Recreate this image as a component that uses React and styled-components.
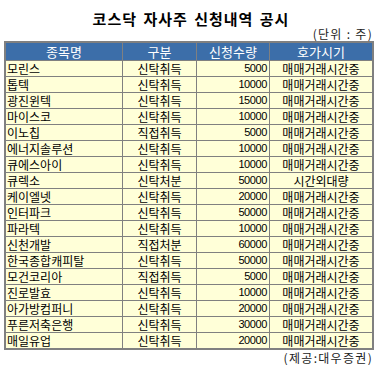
import React from 'react';
import styled, { createGlobalStyle } from 'styled-components';

const rows = [
  ['모린스', '신탁취득', '5000', '매매거래시간중'],
  ['톱텍', '신탁취득', '10000', '매매거래시간중'],
  ['광진윈텍', '신탁취득', '15000', '매매거래시간중'],
  ['마이스코', '신탁취득', '10000', '매매거래시간중'],
  ['이노칩', '직접취득', '5000', '매매거래시간중'],
  ['에너지솔루션', '신탁취득', '10000', '매매거래시간중'],
  ['큐에스아이', '신탁취득', '10000', '매매거래시간중'],
  ['큐렉소', '신탁처분', '50000', '시간외대량'],
  ['케이엘넷', '신탁취득', '20000', '매매거래시간중'],
  ['인터파크', '신탁취득', '50000', '매매거래시간중'],
  ['파라텍', '신탁취득', '10000', '매매거래시간중'],
  ['신천개발', '직접처분', '60000', '매매거래시간중'],
  ['한국종합캐피탈', '신탁취득', '50000', '매매거래시간중'],
  ['모건코리아', '직접취득', '5000', '매매거래시간중'],
  ['진로발효', '신탁취득', '10000', '매매거래시간중'],
  ['아가방컴퍼니', '신탁취득', '20000', '매매거래시간중'],
  ['푸른저축은행', '신탁취득', '30000', '매매거래시간중'],
  ['매일유업', '신탁취득', '20000', '매매거래시간중'],
];

const korean = '"Noto Sans CJK KR", sans-serif';
const latin = '"Liberation Sans", "Noto Sans CJK KR", sans-serif';

const GlobalStyle = createGlobalStyle`
  body {
    margin: 0;
    background: #ffffff;
    font-family: ${korean};
    color: #000000;
  }
`;

const Page = styled.div`
  width: 382px;
  height: 365px;
  overflow: hidden;
`;

const Title = styled.h1`
  margin: 10px 0 0;
  font-family: ${korean};
  font-size: 15px;
  line-height: 17px;
  font-weight: bold;
  text-align: center;
  letter-spacing: 1px;
  word-spacing: 2px;
`;

const Note = styled.div`
  margin-top: ${(p) => p.$top}px;
  padding-right: 9px;
  font-size: 12px;
  line-height: 14px;
  letter-spacing: 1.3px;
  text-align: right;
  color: #222;
`;

const Grid = styled.div`
  margin-left: 4px;
  width: 370px;
  box-sizing: border-box;
  display: grid;
  grid-template-columns: 116px 73px 72px 1fr;
  grid-auto-rows: 15px;
  grid-template-rows: 17px;
  gap: 1px;
  border: 2px solid #808080;
  background: #808080;
`;

const Row = styled.div`
  display: contents;
`;

const HeadCell = styled.div`
  background: #3c6ea9;
  color: #ffffff;
  font-size: 13px;
  line-height: 17px;
  text-align: center;
`;

const Cell = styled.div`
  padding: 0 ${(p) => (p.$align === 'right' ? 2 : 1)}px;
  font-family: ${(p) => (p.$num ? latin : korean)};
  font-size: ${(p) => (p.$num ? 11 : 12)}px;
  letter-spacing: ${(p) => (p.$num ? '-0.4px' : '0')};
  line-height: 15px;
  text-align: ${(p) => p.$align || 'left'};
  white-space: nowrap;
  overflow: hidden;
  background: #ffffd8;
`;

export default function App() {
  return (
    <Page>
      <GlobalStyle />
      <Title>코스닥 자사주 신청내역 공시</Title>
      <Note $top={0}>(단위 : 주)</Note>
      <Grid>
        <Row>
          <HeadCell>종목명</HeadCell>
          <HeadCell>구분</HeadCell>
          <HeadCell>신청수량</HeadCell>
          <HeadCell>호가시기</HeadCell>
        </Row>
        {rows.map(([name, kind, qty, time]) => (
          <Row key={name}>
            <Cell>{name}</Cell>
            <Cell $align="center">{kind}</Cell>
            <Cell $align="right" $num>{qty}</Cell>
            <Cell $align="center">{time}</Cell>
          </Row>
        ))}
      </Grid>
      <Note $top={1}>(제공:대우증권)</Note>
    </Page>
  );
}
